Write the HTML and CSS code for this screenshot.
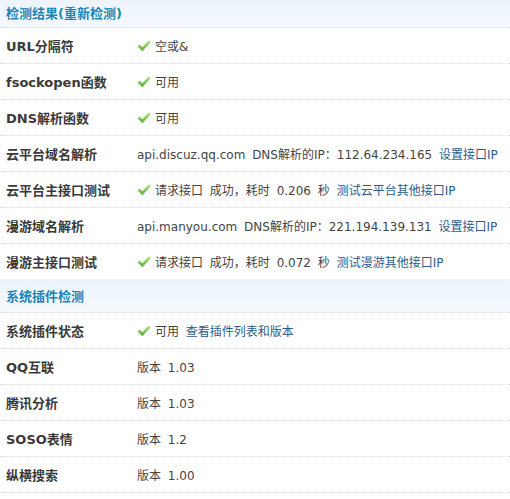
FILE: index.html
```html
<!DOCTYPE html>
<html>
<head>
<meta charset="utf-8">
<link rel="stylesheet" href="styles.css">
</head>
<body>
<div class="panel">
  <div class="head head-first">检测结果(重新检测)</div>
  <div class="row"><div class="label">URL分隔符</div><div class="val"><svg class="ok" viewBox="0 0 14 12"><defs><linearGradient id="g1" x1="0" y1="0" x2="0" y2="1"><stop offset="0" stop-color="#b2e27a"/><stop offset="1" stop-color="#55ad30"/></linearGradient></defs><polygon points="0.5,6.5 2.8,4.6 5.3,7.2 11.8,0.6 13.6,2.2 5.4,11.2" fill="url(#g1)"/></svg><span>空或&amp;</span></div></div>
  <div class="row"><div class="label">fsockopen函数</div><div class="val"><svg class="ok" viewBox="0 0 14 12"><polygon points="0.5,6.5 2.8,4.6 5.3,7.2 11.8,0.6 13.6,2.2 5.4,11.2" fill="url(#g1)"/></svg><span>可用</span></div></div>
  <div class="row"><div class="label">DNS解析函数</div><div class="val"><svg class="ok" viewBox="0 0 14 12"><polygon points="0.5,6.5 2.8,4.6 5.3,7.2 11.8,0.6 13.6,2.2 5.4,11.2" fill="url(#g1)"/></svg><span>可用</span></div></div>
  <div class="row"><div class="label">云平台域名解析</div><div class="val"><span>api.discuz.qq.com DNS解析的IP：112.64.234.165 <a class="link">设置接口IP</a></span></div></div>
  <div class="row"><div class="label">云平台主接口测试</div><div class="val"><svg class="ok" viewBox="0 0 14 12"><polygon points="0.5,6.5 2.8,4.6 5.3,7.2 11.8,0.6 13.6,2.2 5.4,11.2" fill="url(#g1)"/></svg><span>请求接口 成功，耗时 0.206 秒 <a class="link">测试云平台其他接口IP</a></span></div></div>
  <div class="row"><div class="label">漫游域名解析</div><div class="val"><span>api.manyou.com DNS解析的IP：221.194.139.131 <a class="link">设置接口IP</a></span></div></div>
  <div class="row row-last"><div class="label">漫游主接口测试</div><div class="val"><svg class="ok" viewBox="0 0 14 12"><polygon points="0.5,6.5 2.8,4.6 5.3,7.2 11.8,0.6 13.6,2.2 5.4,11.2" fill="url(#g1)"/></svg><span>请求接口 成功，耗时 0.072 秒 <a class="link">测试漫游其他接口IP</a></span></div></div>
  <div class="head">系统插件检测</div>
  <div class="row"><div class="label">系统插件状态</div><div class="val"><svg class="ok" viewBox="0 0 14 12"><polygon points="0.5,6.5 2.8,4.6 5.3,7.2 11.8,0.6 13.6,2.2 5.4,11.2" fill="url(#g1)"/></svg><span>可用 <a class="link">查看插件列表和版本</a></span></div></div>
  <div class="row"><div class="label">QQ互联</div><div class="val"><span>版本 1.03</span></div></div>
  <div class="row"><div class="label">腾讯分析</div><div class="val"><span>版本 1.03</span></div></div>
  <div class="row"><div class="label">SOSO表情</div><div class="val"><span>版本 1.2</span></div></div>
  <div class="row"><div class="label">纵横搜索</div><div class="val"><span>版本 1.00</span></div></div>
</div>
</body>
</html>
```

FILE: styles.css
```css
html, body {
  margin: 0;
  padding: 0;
  background: #ffffff;
}
body {
  font-family: "DejaVu Sans", "Noto Sans CJK SC", sans-serif;
  font-size: 12px;
  color: #333333;
}
.panel {
  width: 510px;
}
.head {
  display: flex;
  align-items: center;
  height: 33px;
  padding-left: 6px;
  background: linear-gradient(#edf4fc, #f6faff);
  border-bottom: 1px dotted #d6dde3;
  color: #1b86b6;
  font-weight: bold;
  font-size: 13px;
}
.head-first {
  height: 25px;
  padding-bottom: 2px;
}
.row {
  display: flex;
  align-items: center;
  height: 35px;
  border-bottom: 1px dotted #dcdcdc;
}
.row-last {
  border-bottom: none;
}
.label {
  width: 137px;
  padding-left: 6px;
  box-sizing: border-box;
  flex: none;
  font-weight: bold;
  font-size: 13px;
  color: #3a3a3a;
}
.val {
  display: flex;
  align-items: center;
  white-space: nowrap;
  color: #444444;
  word-spacing: 3px;
}
.ok {
  width: 14px;
  height: 12px;
  margin-right: 4px;
  flex: none;
}
.link {
  color: #2d5c8c;
  text-decoration: none;
}
```
